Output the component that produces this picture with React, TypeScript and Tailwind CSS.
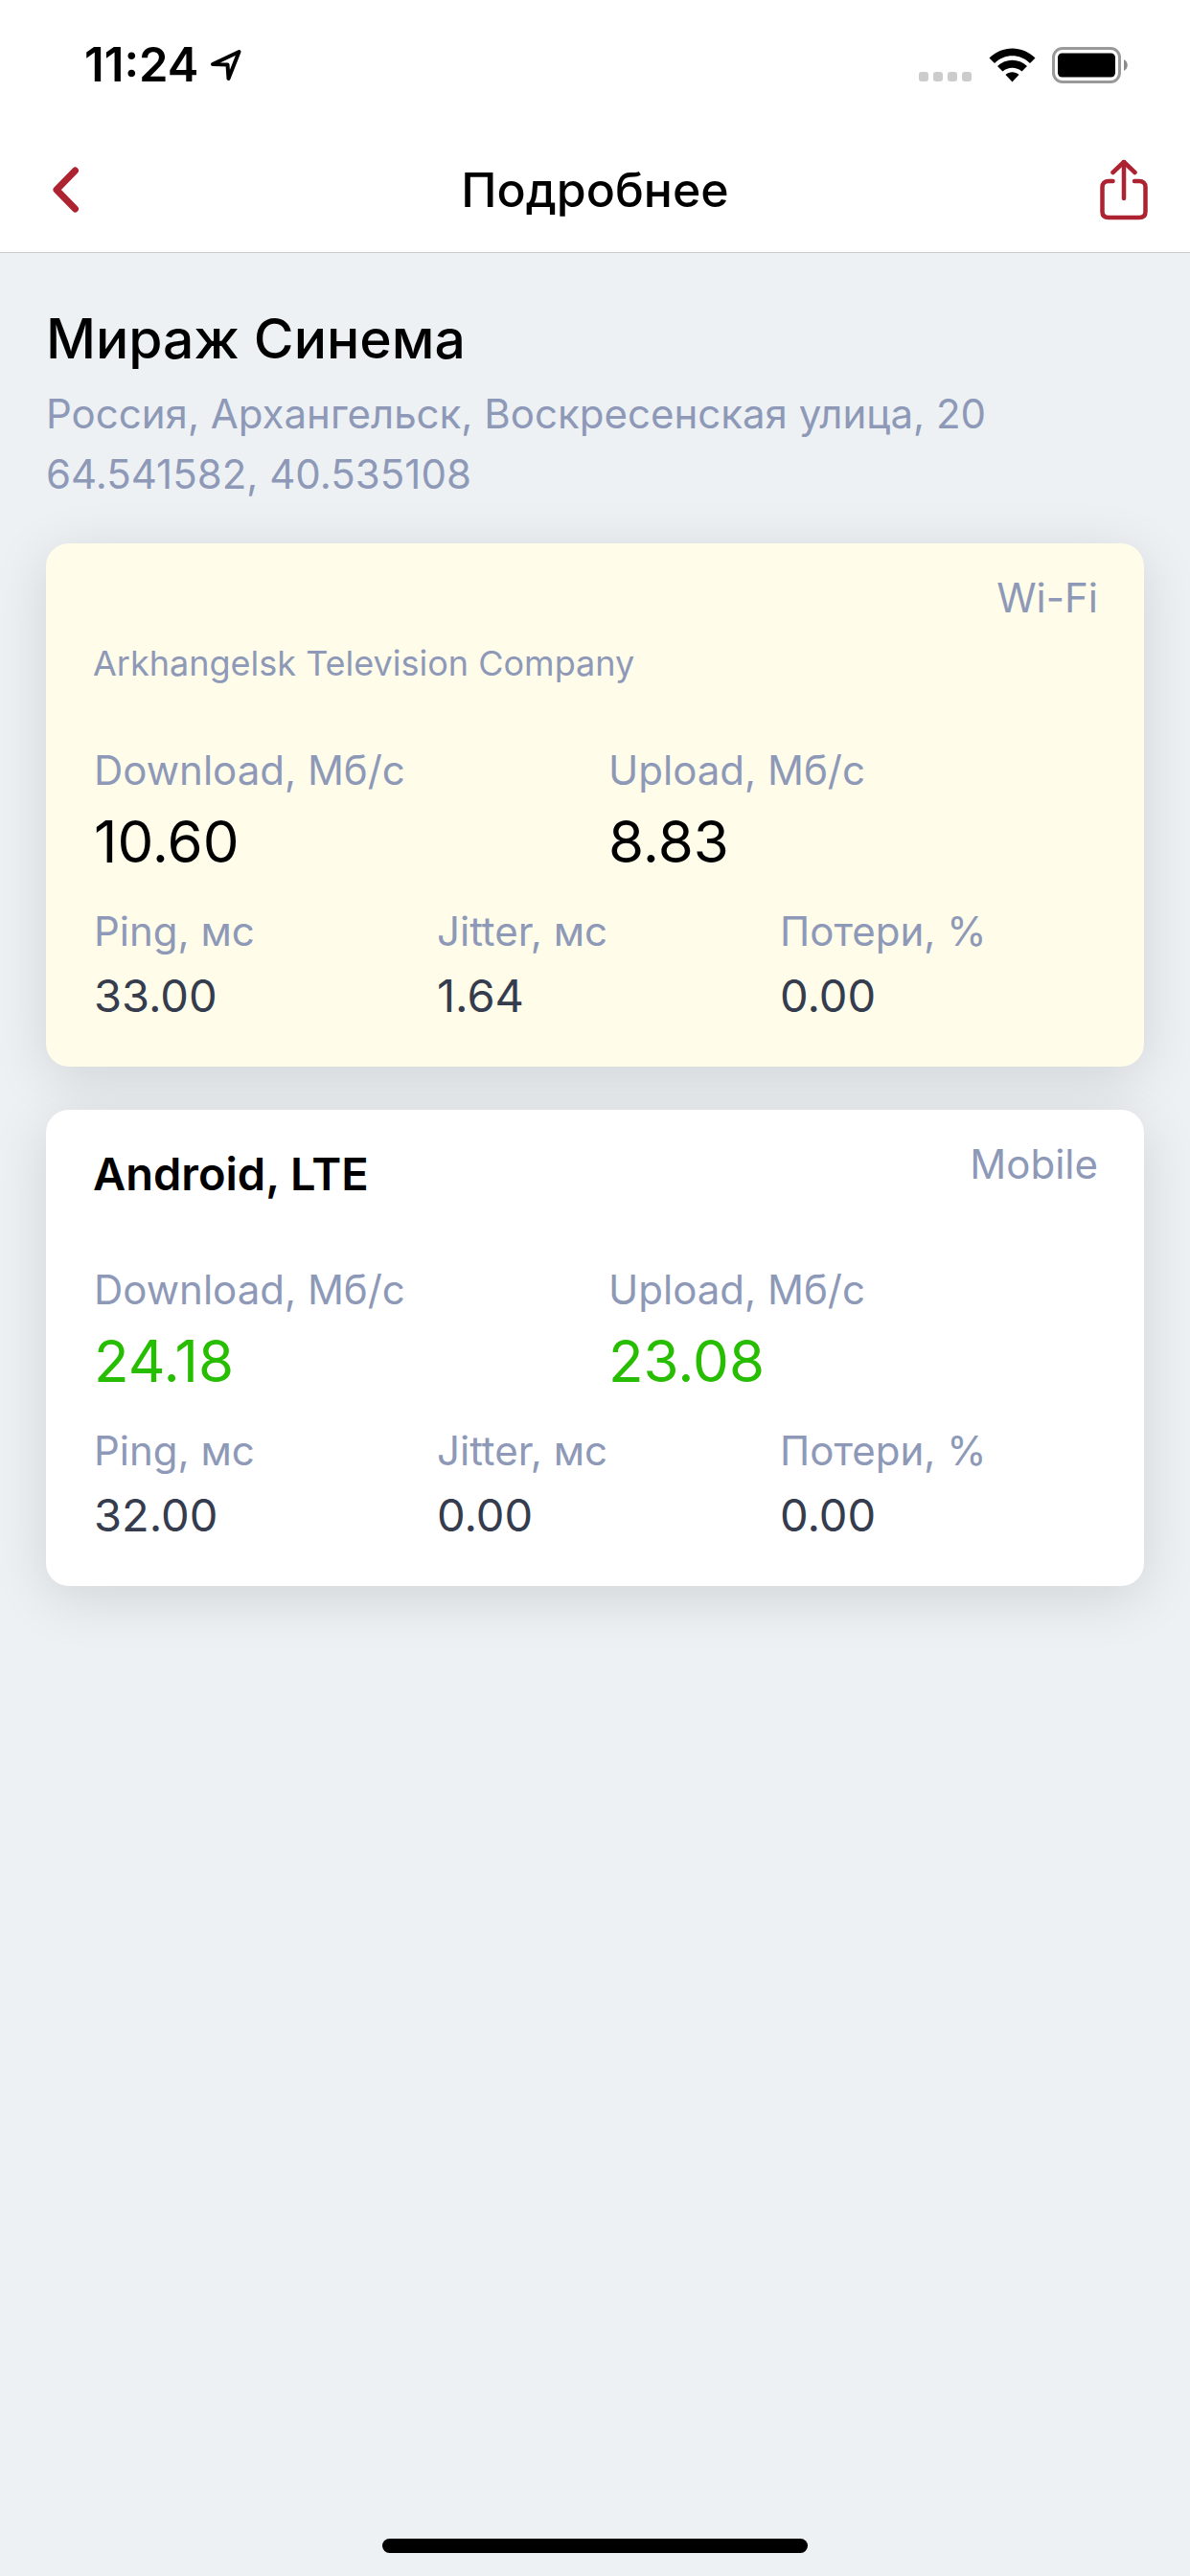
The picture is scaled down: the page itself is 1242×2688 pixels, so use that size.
import { clsx } from 'clsx';

interface Measurement {
  id: string;
  title?: string;
  operator?: string;
  network: string;
  download: string;
  upload: string;
  ping: string;
  jitter: string;
  loss: string;
  highlighted?: boolean;
}

const place = {
  name: 'Мираж Синема',
  address: 'Россия, Архангельск, Воскресенская улица, 20',
  coords: '64.541582, 40.535108',
};

const measurements: Measurement[] = [
  {
    id: 'wifi',
    operator: 'Arkhangelsk Television Company',
    network: 'Wi-Fi',
    download: '10.60',
    upload: '8.83',
    ping: '33.00',
    jitter: '1.64',
    loss: '0.00',
    highlighted: true,
  },
  {
    id: 'mobile',
    title: 'Android, LTE',
    network: 'Mobile',
    download: '24.18',
    upload: '23.08',
    ping: '32.00',
    jitter: '0.00',
    loss: '0.00',
  },
];

function StatusBar() {
  return (
    <div className="flex h-[132px] items-center justify-between pt-1 pl-[88px] pr-[64px]">
      <div className="flex items-center gap-3">
        <span className="text-[49px] leading-[60px] font-semibold">11:24</span>
        <svg width="34" height="34" viewBox="0 0 34 34" fill="none" stroke="currentColor" strokeWidth="4" strokeLinejoin="round">
          <path d="M3 16 L30.5 3 L19.5 31 L18.5 16.5 Z" />
        </svg>
      </div>

      <div className="flex items-center">
        <div className="mt-6 flex gap-[5px]">
          {[0, 1, 2, 3].map(i => (
            <span key={i} className="h-[10px] w-[10px] rounded-[3px] bg-[#cccccc]" />
          ))}
        </div>
        <svg className="ml-[18px]" width="49" height="36" viewBox="0 0 49 36" fill="currentColor">
          <path d="M0.5 10.5 C14 -3 35 -3 48.5 10.5 L43 16 C32.5 5.7 16.5 5.7 6 16 Z" />
          <path d="M9 19 C18 10.7 31 10.7 40 19 L34.5 24.5 C28.5 19.5 20.5 19.5 14.5 24.5 Z" />
          <path d="M17.5 28 C21.5 24.3 27.5 24.3 31.5 28 L24.5 35.5 Z" />
        </svg>
        <svg className="ml-[17px]" width="80" height="38" viewBox="0 0 80 38">
          <rect x="1.5" y="1.5" width="69" height="35" rx="9.5" fill="none" stroke="#999999" strokeWidth="3" />
          <rect x="6" y="6.5" width="60" height="25" rx="4.5" fill="#000000" />
          <path d="M75 13 C80 15.5 80 22.5 75 25 Z" fill="#8c8c8c" />
        </svg>
      </div>
    </div>
  );
}

function NavBar() {
  return (
    <nav className="grid h-[131px] grid-cols-[1fr_auto_1fr] items-center px-[44px]">
      <button type="button" aria-label="Назад" className="justify-self-start pl-[10px] text-[#ad2331]">
        <svg width="30" height="48" viewBox="0 0 30 48" fill="none" stroke="currentColor" strokeWidth="7" strokeLinecap="round" strokeLinejoin="round">
          <path d="M24.5 4 L5 24 L24.5 44" />
        </svg>
      </button>
      <h1 className="text-[50px] leading-[60px] font-medium">Подробнее</h1>
      <button type="button" aria-label="Поделиться" className="justify-self-end text-[#ad2331]">
        <svg width="50" height="64" viewBox="0 0 50 64" fill="none" stroke="currentColor" strokeWidth="4.5" strokeLinecap="round" strokeLinejoin="round">
          <path d="M13.5 23 H9 C5 23 2.5 25.5 2.5 29 V55 C2.5 59 5 61 9 61 H41 C45 61 47.5 59 47.5 55 V29 C47.5 25.5 45 23 41 23 H36" />
          <path d="M25 41 V3" />
          <path d="M13.5 14 L25 3 L36.5 14" />
        </svg>
      </button>
    </nav>
  );
}

function Stat({ label, value, valueClass }: { label: string; value: string; valueClass: string }) {
  return (
    <div>
      <dt className="text-[42px] leading-[50px] text-[#8e99b8]">{label}</dt>
      <dd className={clsx('mt-[13px]', valueClass)}>{value}</dd>
    </div>
  );
}

function MeasurementCard({ item }: { item: Measurement }) {
  // the highlighted card keeps its speeds neutral, the others are green
  const speedClass = clsx('text-[60px] leading-[72px]', item.highlighted ? 'text-black' : 'text-[#27bd00]');
  const detailClass = 'text-[47px] leading-[58px] text-[#343c4e]';

  return (
    <article
      className={clsx(
        'rounded-[24px] pb-[45px] shadow-[0_12px_60px_rgba(0,0,0,0.12)]',
        item.highlighted ? 'bg-[#fffcea]' : 'bg-white'
      )}
    >
      <header className="flex justify-between pr-12 pb-[66px] pl-[49px]">
        <div className="pt-[37px]">
          <h3 className="min-h-[60px] text-[47px] leading-[60px] font-semibold">{item.title}</h3>
          {item.operator && (
            <p className="mt-[7px] text-[36px] leading-[42px] text-[#8e99b8]">{item.operator}</p>
          )}
        </div>
        <span className="pt-8 text-[42px] leading-[50px] text-[#8e99b8]">{item.network}</span>
      </header>

      <dl className="grid grid-cols-2 pr-[22px] pl-[50px]">
        <Stat label="Download, Мб/с" value={item.download} valueClass={speedClass} />
        <Stat label="Upload, Мб/с" value={item.upload} valueClass={speedClass} />
      </dl>
      <dl className="mt-[33px] grid grid-cols-3 pr-[22px] pl-[50px]">
        <Stat label="Ping, мс" value={item.ping} valueClass={detailClass} />
        <Stat label="Jitter, мс" value={item.jitter} valueClass={detailClass} />
        <Stat label="Потери, %" value={item.loss} valueClass={detailClass} />
      </dl>
    </article>
  );
}

export default function App() {
  return (
    <div className="flex min-h-screen flex-col bg-[#edf1f4] font-['Inter','Liberation_Sans',sans-serif] text-black">
      {/* Header */}
      <header className="border-b border-[#c8cacc] bg-white">
        <StatusBar />
        <NavBar />
      </header>

      {/* Place and its measurements */}
      <main className="flex-1 px-12 pt-[54px]">
        <h2 className="text-[57px] leading-[72px] font-medium">{place.name}</h2>
        <div className="mt-[10px] text-[42px] leading-[63px] text-[#8e99b8]">
          <p>{place.address}</p>
          <p>{place.coords}</p>
        </div>

        <div className="mt-[41px] flex flex-col gap-[45px]">
          {measurements.map(item => (
            <MeasurementCard key={item.id} item={item} />
          ))}
        </div>
      </main>

      {/* Home indicator */}
      <footer className="flex justify-center pb-6">
        <div className="h-[15px] w-[444px] rounded-full bg-black" />
      </footer>
    </div>
  );
}
